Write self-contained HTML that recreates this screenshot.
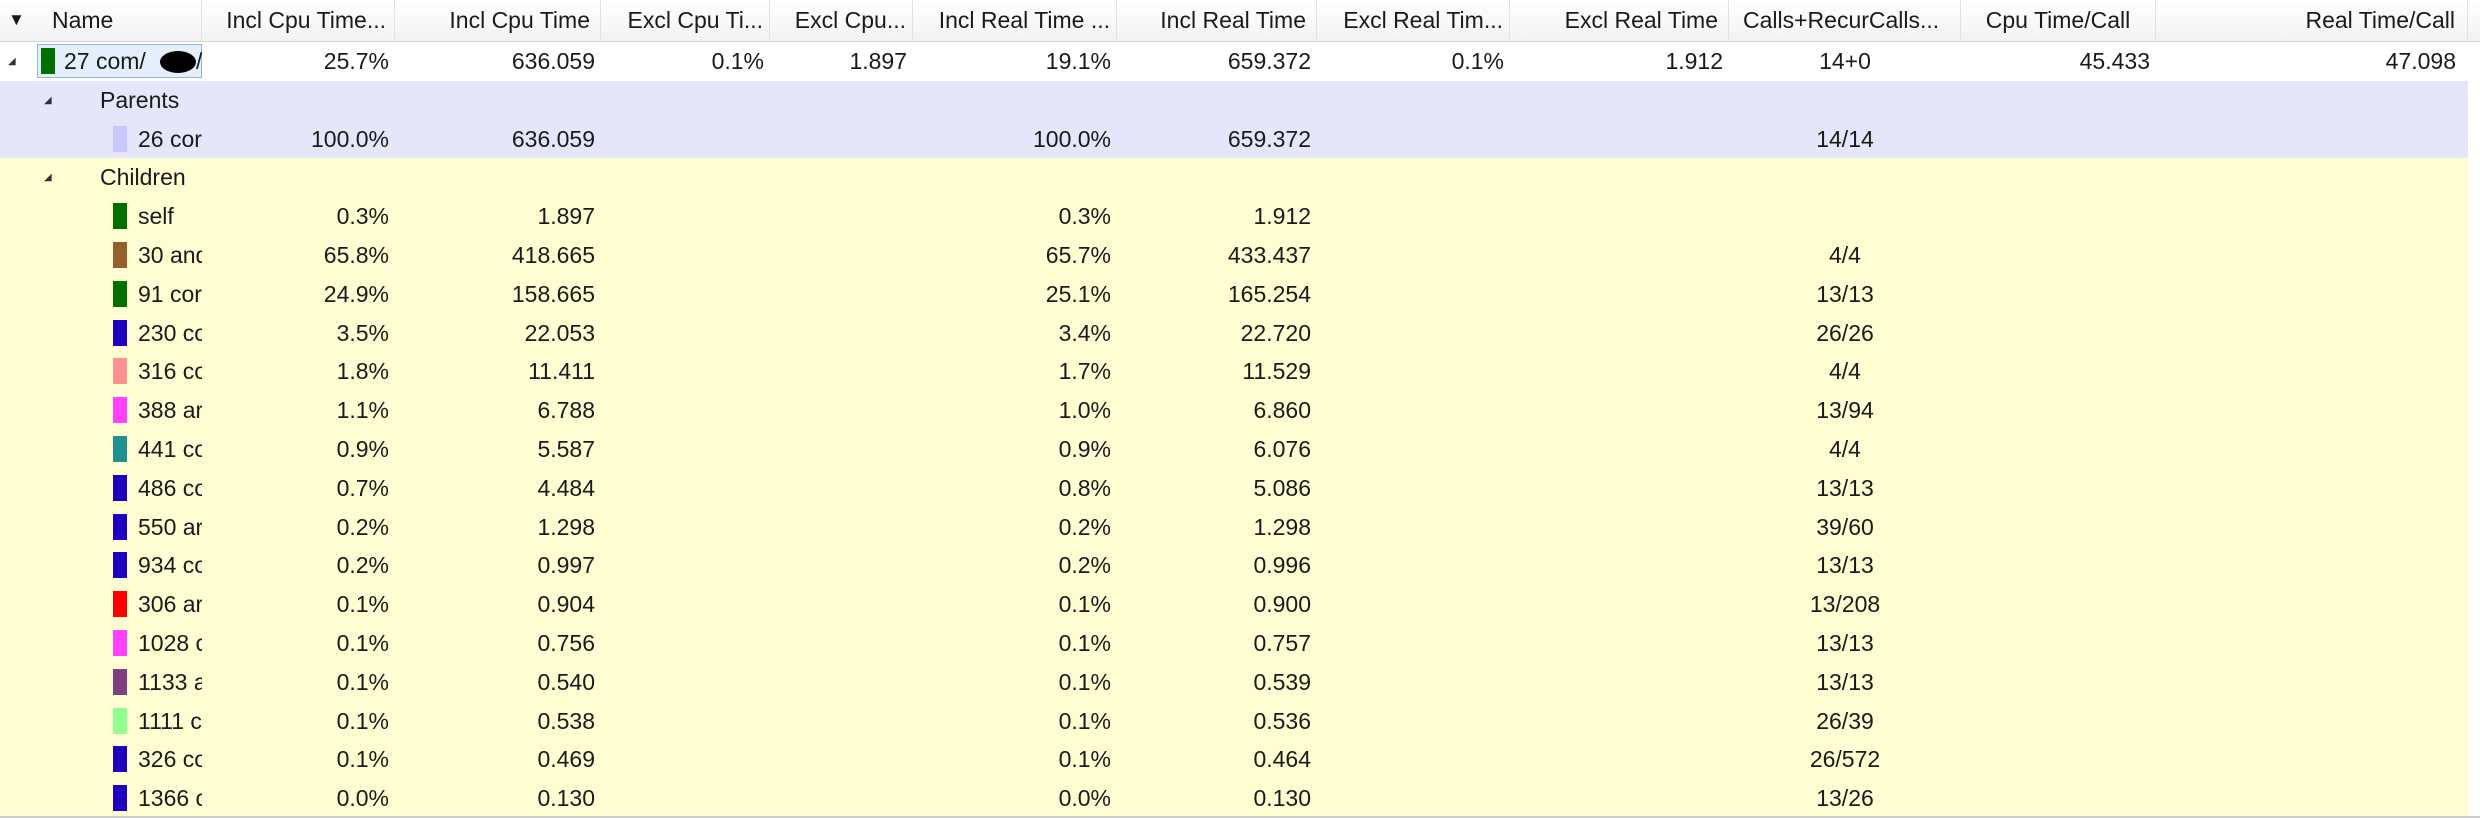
<!DOCTYPE html>
<html><head><meta charset="utf-8"><style>
html,body{margin:0;padding:0;background:#fff;width:2480px;height:818px;overflow:hidden;font-family:"Liberation Sans",sans-serif;font-size:23px;color:#1a1a1a}
.hdr{position:absolute;left:0;top:0;width:2480px;height:41px;background:linear-gradient(#fff,#f1f2f4);border-bottom:1px solid #d5d5d5}
.hc{position:absolute;top:0;height:41px;line-height:40px;border-right:1px solid #e2e2e2;box-sizing:border-box;white-space:nowrap;overflow:hidden}
.row{position:absolute;left:0;width:2468px;height:38.8px;line-height:38.8px}
.c{position:absolute;top:0;height:100%;white-space:nowrap;overflow:hidden;box-sizing:border-box}
.r{text-align:right;padding-right:6px}
.sw{position:absolute;top:6px;width:14px;height:26px}
.ar{position:absolute;font-size:10px;color:#333}
</style></head><body>
<div class="hdr">
<div class="hc" style="left:0;width:202px"><span style="position:absolute;left:8px;font-size:17px">▼</span><span style="position:absolute;left:52px">Name</span></div>
<div class="hc" style="left:202px;width:193px;text-align:right;padding-right:8px">Incl Cpu Time...</div>
<div class="hc" style="left:395px;width:206px;text-align:right;padding-right:10px">Incl Cpu Time</div>
<div class="hc" style="left:601px;width:169px;text-align:right;padding-right:6px">Excl Cpu Ti...</div>
<div class="hc" style="left:770px;width:143px;text-align:right;padding-right:6px">Excl Cpu...</div>
<div class="hc" style="left:913px;width:204px;text-align:right;padding-right:6px">Incl Real Time ...</div>
<div class="hc" style="left:1117px;width:200px;text-align:right;padding-right:10px">Incl Real Time</div>
<div class="hc" style="left:1317px;width:193px;text-align:right;padding-right:6px">Excl Real Tim...</div>
<div class="hc" style="left:1510px;width:219px;text-align:right;padding-right:10px">Excl Real Time</div>
<div class="hc" style="left:1729px;width:232px;padding-left:14px">Calls+RecurCalls...</div>
<div class="hc" style="left:1961px;width:195px;text-align:center">Cpu Time/Call</div>
<div class="hc" style="left:2156px;width:312px;text-align:right;padding-right:12px">Real Time/Call</div>
</div>
<div id="rows"></div>
<div style="position:absolute;left:0;top:816px;width:2480px;height:2px;background:#ccc"></div>
<script>
var cols=[[202,193],[395,206],[601,169],[770,143],[913,204],[1117,200],[1317,193],[1510,219],[1729,232],[1961,195],[2156,312]];
var rows=[
["top","#007000","27 com/","25.7%","636.059","0.1%","1.897","19.1%","659.372","0.1%","1.912","14+0","45.433","47.098"],
["phead","","Parents"],
["p","#c8c8ff","26 cor","100.0%","636.059","","","100.0%","659.372","","","14/14","",""],
["chead","","Children"],
["c","#007000","self","0.3%","1.897","","","0.3%","1.912","","","","",""],
["c","#955f2e","30 and","65.8%","418.665","","","65.7%","433.437","","","4/4","",""],
["c","#007000","91 cor","24.9%","158.665","","","25.1%","165.254","","","13/13","",""],
["c","#2000c0","230 co","3.5%","22.053","","","3.4%","22.720","","","26/26","",""],
["c","#ff9090","316 co","1.8%","11.411","","","1.7%","11.529","","","4/4","",""],
["c","#ff40ff","388 ar","1.1%","6.788","","","1.0%","6.860","","","13/94","",""],
["c","#209090","441 co","0.9%","5.587","","","0.9%","6.076","","","4/4","",""],
["c","#2000c0","486 co","0.7%","4.484","","","0.8%","5.086","","","13/13","",""],
["c","#2000c0","550 ar","0.2%","1.298","","","0.2%","1.298","","","39/60","",""],
["c","#2000c0","934 co","0.2%","0.997","","","0.2%","0.996","","","13/13","",""],
["c","#ff0000","306 ar","0.1%","0.904","","","0.1%","0.900","","","13/208","",""],
["c","#ff40ff","1028 c","0.1%","0.756","","","0.1%","0.757","","","13/13","",""],
["c","#804080","1133 a","0.1%","0.540","","","0.1%","0.539","","","13/13","",""],
["c","#90ff90","1111 c","0.1%","0.538","","","0.1%","0.536","","","26/39","",""],
["c","#2000c0","326 co","0.1%","0.469","","","0.1%","0.464","","","26/572","",""],
["c","#2000c0","1366 c","0.0%","0.130","","","0.0%","0.130","","","13/26","",""]];
var h="";
rows.forEach(function(r,i){
 var t=r[0],top=42+i*38.8;
 var bg=t=="top"?"#fff":(t=="phead"||t=="p")?"#e6e6fa":"#fffed2";
 h+='<div class="row" style="top:'+top+'px;background:'+bg+'">';
 var nm='';
 if(t=="top"){nm='<span class="ar" style="left:8px;top:1px">◢</span><div style="position:absolute;left:37px;top:2px;width:165px;height:34px;border:1px solid #8fb6e0;background:#e4effb;box-sizing:border-box"></div><div class="sw" style="left:41px;background:'+r[1]+'"></div><span style="position:absolute;left:64px">27 com/</span><span style="position:absolute;left:160px;top:9px;width:36px;height:22px;background:#000;border-radius:50%"></span><span style="position:absolute;left:196px">/</span>';}
 else if(t=="phead"||t=="chead"){nm='<span class="ar" style="left:44px;top:1px">◢</span><span style="position:absolute;left:100px">'+r[2]+'</span>';}
 else{nm='<div class="sw" style="left:113px;background:'+r[1]+'"></div><span style="position:absolute;left:138px">'+r[2]+'</span>';}
 h+='<div class="c" style="left:0;width:202px">'+nm+'</div>';
 if(r.length>3){for(var k=0;k<11;k++){var v=r[3+k];if(!v)continue;var c=cols[k];
  if(k==8)h+='<div class="c" style="left:'+c[0]+'px;width:'+c[1]+'px;text-align:center">'+v+'</div>';
  else h+='<div class="c r" style="left:'+c[0]+'px;width:'+c[1]+'px;padding-right:'+(k==10?12:6)+'px">'+v+'</div>';}}
 h+='</div>';
});
document.getElementById("rows").innerHTML=h;
</script>
</body></html>
